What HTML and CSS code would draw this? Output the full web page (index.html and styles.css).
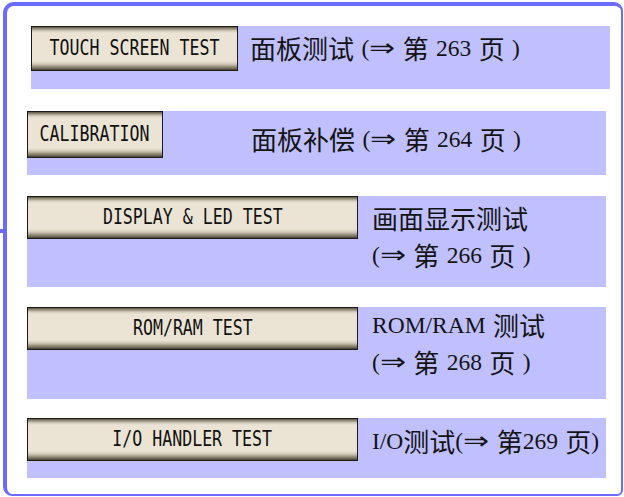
FILE: index.html
```html
<!DOCTYPE html>
<html lang="zh-CN">
<head>
<meta charset="utf-8">
<title>Self Test Menu</title>
<link rel="stylesheet" href="styles.css">
</head>
<body>
<div class="frame">
  <div class="row row--touch">
    <div class="btn btn--touch"><span class="btn__label">TOUCH SCREEN TEST</span></div>
    <div class="desc desc--touch"><span class="zh">面板测试</span> (<span class="arrow">⇒</span> <span class="zh">第</span> 263 <span class="zh">页</span> )</div>
  </div>
  <div class="row row--calib">
    <div class="btn btn--calib"><span class="btn__label">CALIBRATION</span></div>
    <div class="desc desc--calib"><span class="zh">面板补偿</span> (<span class="arrow">⇒</span> <span class="zh">第</span> 264 <span class="zh">页</span> )</div>
  </div>
  <div class="row row--display">
    <div class="btn btn--wide"><span class="btn__label">DISPLAY &amp; LED TEST</span></div>
    <div class="desc desc--display"><span class="zh">画面显示测试</span><br>(<span class="arrow">⇒</span> <span class="zh">第</span> 266 <span class="zh">页</span> )</div>
  </div>
  <div class="row row--rom">
    <div class="btn btn--wide"><span class="btn__label">ROM/RAM TEST</span></div>
    <div class="desc desc--rom">ROM/RAM <span class="zh">测试</span><br>(<span class="arrow">⇒</span> <span class="zh">第</span> 268 <span class="zh">页</span> )</div>
  </div>
  <div class="row row--io">
    <div class="btn btn--wide"><span class="btn__label">I/O HANDLER TEST</span></div>
    <div class="desc desc--io">I/O<span class="zh">测试</span>(<span class="arrow">⇒</span> <span class="zh">第</span>269 <span class="zh">页</span>)</div>
  </div>
</div>
</body>
</html>
```
FILE: styles.css
```css
html, body {
  margin: 0;
  padding: 0;
  background: #ffffff;
}

.frame {
  position: relative;
  box-sizing: border-box;
  width: 620px;
  height: 494px;
  margin: 2px 1px 1px 3px;
  border-style: solid;
  border-color: #6b6bff;
  border-width: 4px 2px 2px 4px;
  border-radius: 11px 9px 6px 9px;
  padding: 20px 0 0 20px;
  display: flex;
  flex-direction: column;
}

.frame::before {
  content: "";
  position: absolute;
  left: -7px;
  top: 223px;
  width: 4px;
  height: 4px;
  background: #6b6bff;
}

.row {
  width: 579px;
  background: #c0c0ff;
  display: flex;
  align-items: flex-start;
  flex-shrink: 0;
}

.row--touch { height: 63px; margin-left: 4px; }
.row--calib { height: 64px; margin-top: 22px; }
.row--display { height: 91px; margin-top: 21px; }
.row--rom { height: 92px; margin-top: 20px; }
.row--io { height: 60px; margin-top: 19px; }

.btn {
  box-sizing: border-box;
  flex-shrink: 0;
  border: 1px solid #1c1a16;
  background: linear-gradient(to bottom,
    #5e5646 0px,
    #9d9480 2px,
    #d6cebd 4px,
    #ebe4d4 6px,
    #ebe4d4 calc(100% - 9px),
    #d2cab8 calc(100% - 6px),
    #928975 calc(100% - 3px),
    #4a4236 100%);
  display: flex;
  align-items: center;
  justify-content: center;
}

.btn--touch { width: 207px; height: 45px; }
.btn--calib { width: 136px; height: 47px; }
.btn--wide { width: 331px; height: 43px; }

.btn__label {
  display: inline-block;
  font-family: "DejaVu Sans Mono", "Liberation Mono", monospace;
  font-size: 21px;
  line-height: 1;
  color: #111111;
  white-space: pre;
  transform: scaleX(0.79);
  margin-top: -1px;
}

.desc {
  font-family: "Liberation Serif", "DejaVu Serif", "Noto Sans CJK SC", serif;
  font-size: 23.5px;
  line-height: 37px;
  color: #141414;
  white-space: nowrap;
  word-spacing: 1.5px;
}

.zh {
  font-family: "Noto Sans CJK SC", sans-serif;
  font-size: 26px;
  line-height: 1;
  vertical-align: -3px;
}

.arrow {
  display: inline-block;
  font-family: "DejaVu Sans", sans-serif;
  font-size: 24px;
  line-height: 1;
  margin: 0 3px 0 3px;
  transform: scaleX(1.3);
}

.desc--touch { margin-left: 12px; padding-top: 4px; }
.desc--calib { margin-left: 88px; padding-top: 10px; }
.desc--display { margin-left: 14px; padding-top: 4px; }
.desc--rom { margin-left: 14px; padding-top: 0; }
.desc--io { margin-left: 14px; padding-top: 5px; }
```
